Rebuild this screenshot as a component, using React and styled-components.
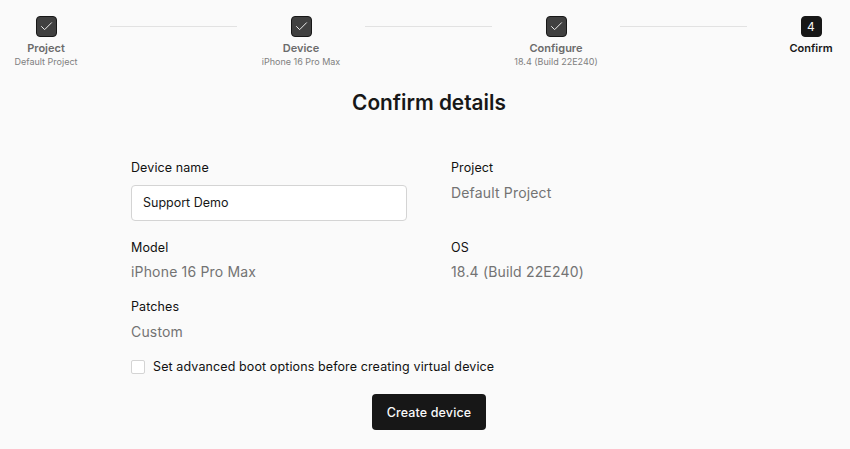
import React from "react"
import styled, { createGlobalStyle } from "styled-components"
import { Check } from "lucide-react"

const GlobalStyle = createGlobalStyle`
    html, body {
        margin: 0;
        padding: 0;
        background: #fafafa;
        overflow: hidden;
    }
    body {
        font-family: Inter, "Liberation Sans", sans-serif;
        color: #171717;
    }
`
const Page = styled.div`
    width: 850px;
    height: 449px;
    background: #fafafa;
`
const Stepper = styled.div`
    display: flex;
    align-items: flex-start;
    gap: 25px;
    padding: 16px 0 0 7px;
`
const Step = styled.div`
    flex: 0 0 78px;
    min-width: 0;
    display: flex;
    flex-direction: column;
    align-items: center;
    white-space: nowrap;
`
const Badge = styled.div`
    width: 21px;
    height: 21px;
    box-sizing: border-box;
    display: flex;
    align-items: center;
    justify-content: center;
    border-radius: 4px;
    color: #f5f5f5;
    font-size: 12px;
    background: ${props => props.$done ? "#404040" : "#171717"};
    border: 1px solid #171717;
`
const StepTitle = styled.div`
    margin-top: 4px;
    font-size: 11px;
    line-height: 14px;
    font-weight: 600;
    color: ${props => props.$done ? "#6b6b6b" : "#171717"};
`
const StepHint = styled.div`
    margin-top: 1px;
    font-size: 9px;
    line-height: 12px;
    color: #808080;
`
const Line = styled.div`
    flex: 1;
    height: 1px;
    margin-top: 10px;
    background: #e2e2e2;
`
const Main = styled.div`
    display: flex;
    flex-direction: column;
    align-items: center;
    padding-left: 8px;
`
const Heading = styled.h1`
    margin: 21px 0 0;
    font-size: 20.8px;
    line-height: 28px;
    font-weight: 600;
`
const Form = styled.div`
    width: 596px;
    margin-top: 43px;
    display: grid;
    grid-template-columns: 276px 276px;
    column-gap: 44px;
`
const Field = styled.div`
    display: flex;
    flex-direction: column;
    margin-bottom: ${props => props.$gap}px;
`
const Label = styled.div`
    font-size: 12.5px;
    line-height: 16px;
    font-weight: 400;
    letter-spacing: 0.1px;
    color: #111;
`
const Value = styled.div`
    margin-top: 7.5px;
    font-size: 14px;
    line-height: 18px;
    letter-spacing: 0.17px;
    color: #737373;
`
const Input = styled.input`
    margin-top: 9px;
    height: 36px;
    box-sizing: border-box;
    padding: 0 11px 1px;
    font: inherit;
    font-size: 12.5px;
    color: #171717;
    background: #fff;
    border: 1px solid #d4d4d4;
    border-radius: 4px;
    outline: none;
`
const BootRow = styled.label`
    grid-column: 1 / -1;
    display: flex;
    align-items: center;
    gap: 8px;
    font-size: 12.5px;
    line-height: 16px;
    font-weight: 400;
    letter-spacing: 0.11px;
    color: #111;
`
const Box = styled.span`
    width: 14px;
    height: 14px;
    box-sizing: border-box;
    background: #fff;
    border: 1px solid #d4d4d4;
    border-radius: 2px;
`
const CreateButton = styled.button`
    margin-top: 19px;
    width: 114px;
    height: 36px;
    border: 0;
    border-radius: 4px;
    background: #171717;
    color: #fafafa;
    font: inherit;
    font-size: 12.5px;
    font-weight: 500;
    letter-spacing: 0.12px;
`

const steps = [
    { title: "Project", hint: "Default Project", badge: "done" },
    { title: "Device", hint: "iPhone 16 Pro Max", badge: "done" },
    { title: "Configure", hint: "18.4 (Build 22E240)", badge: "done" },
    { title: "Confirm", badge: "4" },
]

export default function App() {
    return (
        <Page>
            <GlobalStyle />
            <Stepper>
                {steps.map((step, i) => {
                    const done = step.badge === "done"
                    return (
                        <React.Fragment key={step.title}>
                            {i > 0 && <Line />}
                            <Step>
                                <Badge $done={done}>
                                    {done ? <Check size={15} strokeWidth={1.5} /> : step.badge}
                                </Badge>
                                <StepTitle $done={done}>{step.title}</StepTitle>
                                {step.hint && <StepHint>{step.hint}</StepHint>}
                            </Step>
                        </React.Fragment>
                    )
                })}
            </Stepper>
            <Main>
                <Heading>Confirm details</Heading>
                <Form>
                    <Field $gap={18.5}>
                        <Label>Device name</Label>
                        <Input defaultValue="Support Demo" />
                    </Field>
                    <Field $gap={18.5}>
                        <Label>Project</Label>
                        <Value>Default Project</Value>
                    </Field>
                    <Field $gap={18}>
                        <Label>Model</Label>
                        <Value>iPhone 16 Pro Max</Value>
                    </Field>
                    <Field $gap={18}>
                        <Label>OS</Label>
                        <Value>18.4 (Build 22E240)</Value>
                    </Field>
                    <Field $gap={18.5}>
                        <Label>Patches</Label>
                        <Value>Custom</Value>
                    </Field>
                    <div />
                    <BootRow>
                        <Box />
                        Set advanced boot options before creating virtual device
                    </BootRow>
                </Form>
                <CreateButton>Create device</CreateButton>
            </Main>
        </Page>
    )
}
